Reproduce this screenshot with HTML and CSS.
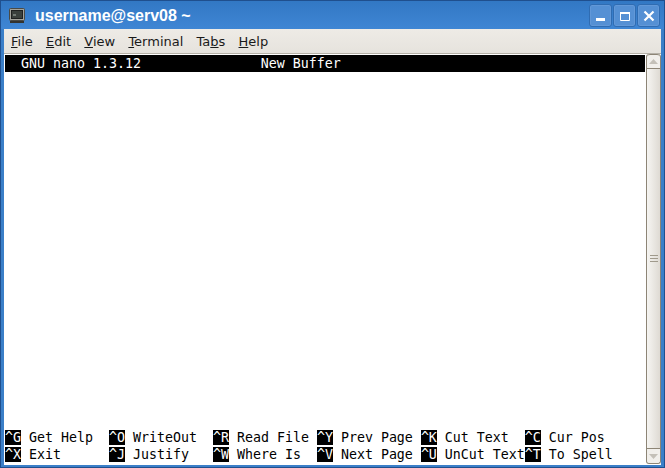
FILE: index.html
```
<!DOCTYPE html>
<html lang="en">
<head>
<meta charset="utf-8">
<title>username@serv08 ~</title>
<link rel="stylesheet" href="styles.css">
</head>
<body>
<div class="window">
  <header class="titlebar">
    <svg class="app-icon" width="16" height="15" viewBox="0 0 16 15">
      <rect x="0.5" y="0.5" width="15" height="12" rx="1" fill="#a3a39c" stroke="#4a4a45"/>
      <rect x="2.5" y="2.5" width="11" height="8" fill="#3a403c" stroke="#1f2120" stroke-width="1"/>
      <path d="M4 7h3" stroke="#aab3ac" stroke-width="1"/>
      <rect x="1" y="13" width="14" height="2" fill="#33332f"/>
    </svg>
    <span class="title">username@serv08 ~</span>
    <div class="controls">
      <button class="ctl"><svg width="12" height="12" viewBox="0 0 12 12"><rect x="1" y="8" width="9" height="3" fill="#fff"/></svg></button>
      <button class="ctl"><svg width="12" height="12" viewBox="0 0 12 12"><path d="M1.5 2.5h9v8h-9z" fill="none" stroke="#fff" stroke-width="1"/><rect x="1" y="2" width="10" height="2" fill="#fff"/></svg></button>
      <button class="ctl"><svg width="12" height="12" viewBox="0 0 12 12"><path d="M1.5 1.5l9 9M10.5 1.5l-9 9" stroke="#fff" stroke-width="2.2"/></svg></button>
    </div>
  </header>
  <div class="client">
    <nav class="menubar">
      <span class="menu"><u>F</u>ile</span>
      <span class="menu"><u>E</u>dit</span>
      <span class="menu"><u>V</u>iew</span>
      <span class="menu"><u>T</u>erminal</span>
      <span class="menu">Ta<u>b</u>s</span>
      <span class="menu"><u>H</u>elp</span>
    </nav>
    <div class="term-row">
      <main class="terminal">
        <pre class="line status">  GNU nano 1.3.12               New Buffer</pre>
        <div class="blank"></div>
        <pre class="line"><b>^G</b> Get Help  <b>^O</b> WriteOut  <b>^R</b> Read File <b>^Y</b> Prev Page <b>^K</b> Cut Text  <b>^C</b> Cur Pos</pre>
        <pre class="line"><b>^X</b> Exit      <b>^J</b> Justify   <b>^W</b> Where Is  <b>^V</b> Next Page <b>^U</b> UnCut Text<b>^T</b> To Spell</pre>
      </main>
      <aside class="scrollbar">
        <div class="stepper up"><svg width="9" height="5" viewBox="0 0 9 5"><path d="M4.5 0L9 5H0z" fill="#c4c0b8"/></svg></div>
        <div class="thumb"><i></i><i></i><i></i></div>
        <div class="stepper down"><svg width="9" height="5" viewBox="0 0 9 5"><path d="M4.5 5L9 0H0z" fill="#c4c0b8"/></svg></div>
      </aside>
    </div>
  </div>
</div>
</body>
</html>
```
FILE: styles.css
```
* { box-sizing: border-box; }
html, body { margin: 0; height: 100%; overflow: hidden; }
.window {
  width: 665px; height: 468px; display: flex; flex-direction: column;
  background: #3b7fc8;
  border: 1px solid #1f4f8e;
  padding: 0 3px 2px 3px;
}
.titlebar {
  height: 28px; display: flex; align-items: center; flex: none;
  background: linear-gradient(#3278c4, #3f86d4);
  margin: 0 -3px; padding: 0 4px 0 8px;
}
.app-icon { flex: none; margin-right: 10px; }
.title { font: bold 16px "Liberation Sans", Arial, sans-serif; color: #fff; flex: 1; margin-top: 2px; }
.controls { display: flex; gap: 1px; margin-top: 1px; }
.ctl {
  width: 23px; height: 23px; padding: 0; display: flex; align-items: center; justify-content: center;
  background: #5590d4; border: 1px solid #2f6cb2; border-radius: 3px;
  box-shadow: inset 0 0 0 1px #6298d8;
}
.client { flex: 1; display: flex; flex-direction: column; background: #e8e5df; min-height: 0; }
.menubar {
  height: 25px; flex: none; display: flex; align-items: center;
  background: linear-gradient(#eeebe6, #e6e3dd);
  border-bottom: 1px solid #b5b1a8;
  font: 13px "DejaVu Sans", sans-serif; color: #1a1a1a;
}
.menu { padding: 0 6.6px; }
.menu:first-child { margin-left: 0.4px; }
.term-row { flex: 1; display: flex; min-height: 0; padding-left: 1px; background: #fff; }
.terminal {
  width: 641px; flex: none; background: #fff; display: flex; flex-direction: column;
  padding: 1px 1px 2px 0; overflow: hidden;
  font: 13.29px/17px "DejaVu Sans Mono", monospace; color: #000;
}
.line { margin: 0; height: 17px; font: inherit; white-space: pre; }
.line b { font-weight: normal; background: #000; color: #fff; }
.status { background: #000; color: #fff; }
.blank { flex: 1; }
.scrollbar {
  flex: 1; display: flex; flex-direction: column; align-items: stretch;
  margin-bottom: 1px;
  background: #e8e5df; border-left: 1px solid #8d8576; border-right: 1px solid #8d8576;
  border-bottom: 1px solid #8d8576; border-radius: 3px;
}
.stepper { height: 15px; flex: none; display: flex; align-items: center; justify-content: center; background: #f1efeb; }
.stepper.up { border-top: 1px solid #8d8576; border-bottom: 1px solid #8d8576; border-radius: 3px 3px 0 0; }
.stepper.down { border-top: 1px solid #8d8576; border-radius: 0 0 3px 3px; }
.thumb {
  flex: 1; display: flex; flex-direction: column; gap: 2px; align-items: center; justify-content: center;
  background: linear-gradient(90deg, #f6f5f2, #dedad3);
}
.thumb i { display: block; width: 8px; height: 1px; background: #a09a8c; }
```
